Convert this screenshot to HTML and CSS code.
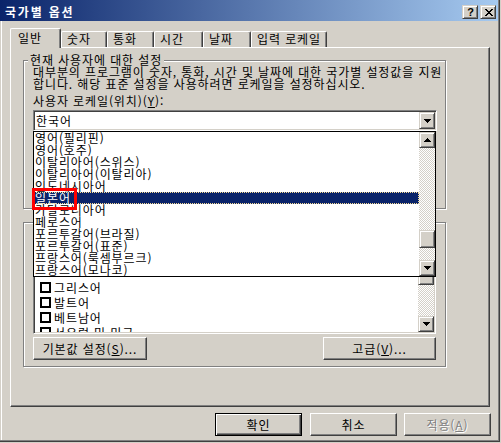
FILE: index.html
```html
<!DOCTYPE html>
<html lang="ko">
<head>
<meta charset="utf-8">
<title>국가별 옵션</title>
<link rel="stylesheet" href="styles.css">
</head>
<body>
<div class="window">
  <div class="titlebar">
    <span class="title">국가별 옵션</span>
    <div class="caption-btns">
      <div class="cbtn help">?</div>
      <div class="cbtn close">
        <svg width="8" height="7" viewBox="0 0 8 7" shape-rendering="crispEdges"><path d="M0 0h2v1H0zM6 0h2v1H6zM1 1h2v1H1zM5 1h2v1H5zM2 2h4v1H2zM3 3h2v1H3zM2 4h4v1H2zM1 5h2v1H1zM5 5h2v1H5zM0 6h2v1H0zM6 6h2v1H6z"/></svg>
      </div>
    </div>
  </div>

  <div class="tabs">
    <div class="tab active w51">일반</div>
    <div class="tab w46">숫자</div>
    <div class="tab w47">통화</div>
    <div class="tab w49">시간</div>
    <div class="tab w48">날짜</div>
    <div class="tab w76">입력 로케일</div>
  </div>

  <div class="panel">
    <div class="group group-1">
      <div class="legend">현재 사용자에 대한 설정</div>
      <div class="desc">대부분의 프로그램이 숫자, 통화, 시간 및 날짜에 대한 국가별 설정값을 지원<br>합니다. 해당 표준 설정을 사용하려면 로케일을 설정하십시오.</div>
      <div class="field-label">사용자 로케일(위치)(<u>Y</u>):</div>
      <div class="combo">
        <span class="combo-text">한국어</span>
        <div class="sb-btn combo-btn">
          <svg width="7" height="4" viewBox="0 0 7 4" shape-rendering="crispEdges"><path d="M0 0h7v1H0zM1 1h5v1H1zM2 2h3v1H2zM3 3h1v1H3z"/></svg>
        </div>
        <div class="dropdown">
          <div class="dd-list">
            <div class="dd-item">영어(필리핀)</div>
            <div class="dd-item">영어(호주)</div>
            <div class="dd-item">이탈리아어(스위스)</div>
            <div class="dd-item">이탈리아어(이탈리아)</div>
            <div class="dd-item">인도네시아어</div>
            <div class="dd-item selected">일본어</div>
            <div class="dd-item">카탈로니아어</div>
            <div class="dd-item">페로스어</div>
            <div class="dd-item">포르투갈어(브라질)</div>
            <div class="dd-item">포르투갈어(표준)</div>
            <div class="dd-item">프랑스어(룩셈부르크)</div>
            <div class="dd-item">프랑스어(모나코)</div>
          </div>
          <div class="scrollbar">
            <div class="sb-btn">
              <svg width="7" height="4" viewBox="0 0 7 4" shape-rendering="crispEdges"><path d="M3 0h1v1H3zM2 1h3v1H2zM1 2h5v1H1zM0 3h7v1H0z"/></svg>
            </div>
            <div class="track dd-track-a"></div>
            <div class="sb-thumb dd-thumb"></div>
            <div class="track dd-track-b"></div>
            <div class="sb-btn">
              <svg width="7" height="4" viewBox="0 0 7 4" shape-rendering="crispEdges"><path d="M0 0h7v1H0zM1 1h5v1H1zM2 2h3v1H2zM3 3h1v1H3z"/></svg>
            </div>
          </div>
          <div class="annot"></div>
        </div>
      </div>
    </div>

    <div class="group group-2">
      <div class="checklist">
        <div class="cl-items">
          <div class="cl-item"><span class="box"></span><span>그리스어</span></div>
          <div class="cl-item"><span class="box"></span><span>발트어</span></div>
          <div class="cl-item"><span class="box"></span><span>베트남어</span></div>
          <div class="cl-item"><span class="box"></span><span>서유럽 및 미국</span></div>
        </div>
        <div class="scrollbar">
          <div class="sb-btn">
            <svg width="7" height="4" viewBox="0 0 7 4" shape-rendering="crispEdges"><path d="M3 0h1v1H3zM2 1h3v1H2zM1 2h5v1H1zM0 3h7v1H0z"/></svg>
          </div>
          <div class="sb-thumb cl-thumb"></div>
          <div class="track cl-track"></div>
          <div class="sb-btn">
            <svg width="7" height="4" viewBox="0 0 7 4" shape-rendering="crispEdges"><path d="M0 0h7v1H0zM1 1h5v1H1zM2 2h3v1H2zM3 3h1v1H3z"/></svg>
          </div>
        </div>
      </div>
      <div class="btn-row">
        <div class="btn btn-default-set">기본값 설정(<u>S</u>)...</div>
        <div class="btn btn-advanced">고급(<u>V</u>)...</div>
      </div>
    </div>
  </div>

  <div class="footer">
    <div class="btn dlg-btn default ok">확인</div>
    <div class="btn dlg-btn">취소</div>
    <div class="btn dlg-btn disabled">적용(<u>A</u>)</div>
  </div>
</div>
</body>
</html>
```
FILE: styles.css
```css
html, body {
  margin: 0;
  padding: 0;
  background: #d4d0c8;
}

body {
  font-family: "Noto Sans CJK KR", "Noto Sans", sans-serif;
  font-size: 12px;
  line-height: 12px;
  letter-spacing: 0.9px;
  color: #000;
}

u { text-decoration: underline; text-underline-offset: 1px; }

.window {
  position: relative;
  width: 500px;
  height: 442px;
  box-sizing: border-box;
  background: #d4d0c8;
  border-right: 1px solid #404040;
  border-bottom: 1px solid #404040;
  box-shadow: inset -1px -1px 0 #808080, inset 1px 0 0 #d4d0c8, inset 2px 0 0 #fff;
}

/* title bar */
.titlebar {
  display: flex;
  align-items: center;
  justify-content: space-between;
  height: 21px;
  margin-right: 1px;
  padding: 3px 2px 0 5px;
  box-sizing: border-box;
  background: linear-gradient(to right, #0a246a, #a6caf0);
}

.title {
  color: #fff;
  font-weight: bold;
  font-size: 12px;
  letter-spacing: 1.8px;
  line-height: 12px;
}

.caption-btns {
  display: flex;
  gap: 2px;
}

.cbtn {
  width: 16px;
  height: 14px;
  box-sizing: border-box;
  background: #d4d0c8;
  border: 1px solid;
  border-color: #d4d0c8 #404040 #404040 #d4d0c8;
  box-shadow: inset 1px 1px 0 #fff, inset -1px -1px 0 #808080;
  display: flex;
  align-items: center;
  justify-content: center;
}

.help {
  font-family: "Liberation Sans", sans-serif;
  font-weight: bold;
  font-size: 11px;
  line-height: 11px;
  letter-spacing: 0;
  padding-left: 1px;
}

.close svg { margin-left: 1px; }

/* tabs */
.tabs {
  position: relative;
  z-index: 1;
  display: flex;
  align-items: flex-end;
  height: 19px;
  margin: 7px 0 0 10px;
}

.tab {
  height: 16px;
  box-sizing: border-box;
  background: #d4d0c8;
  border-top: 1px solid #fff;
  border-left: 1px solid #fff;
  border-right: 1px solid #404040;
  box-shadow: inset -1px 0 0 #808080;
  border-radius: 2px 2px 0 0;
  padding-left: 5px;
  line-height: 13px;
  white-space: nowrap;
}

.tab.active {
  height: 20px;
  margin-bottom: -1px;
  padding-left: 7px;
  line-height: 17px;
}

.w46 { width: 46px; }
.w47 { width: 47px; }
.w48 { width: 48px; }
.w49 { width: 49px; }
.w51 { width: 51px; }
.w76 { width: 76px; }

/* panel */
.panel {
  width: 480px;
  height: 360px;
  margin-left: 10px;
  box-sizing: border-box;
  border: 1px solid;
  border-color: #fff #404040 #404040 #fff;
  box-shadow: inset -1px -1px 0 #808080;
  padding: 12px 0 0 12px;
}

.group {
  width: 423px;
  box-sizing: border-box;
  border: 1px solid #808080;
  box-shadow: inset 1px 1px 0 #fff, 1px 1px 0 #fff;
  padding-left: 9px;
}

.group-1 { height: 149px; }
.group-2 { height: 145px; margin-top: 13px; }

.legend {
  width: fit-content;
  height: 12px;
  margin: -7px 0 0 -5px;
  padding: 0 2px;
  background: #d4d0c8;
  white-space: nowrap;
}

.desc {
  white-space: nowrap;
}

.field-label { margin-top: 5px; }

/* combo box */
.combo {
  position: relative;
  margin-top: 3px;
  width: 404px;
  height: 21px;
  box-sizing: border-box;
  border: 1px solid;
  border-color: #808080 #fff #fff #808080;
  box-shadow: inset 1px 1px 0 #404040, inset -1px -1px 0 #d4d0c8;
  background: #fff;
  padding: 1px 1px 1px 2px;
  display: flex;
  align-items: center;
  justify-content: space-between;
}

.sb-btn {
  width: 16px;
  height: 16px;
  flex: none;
  box-sizing: border-box;
  background: #d4d0c8;
  border: 1px solid;
  border-color: #d4d0c8 #404040 #404040 #d4d0c8;
  box-shadow: inset 1px 1px 0 #fff, inset -1px -1px 0 #808080;
  display: flex;
  align-items: center;
  justify-content: center;
}

.combo-btn { height: 17px; }

/* dropdown popup list */
.dropdown {
  position: absolute;
  z-index: 5;
  left: -1px;
  top: 20px;
  width: 403px;
  height: 146px;
  box-sizing: border-box;
  border: 1px solid #000;
  background: #fff;
  display: flex;
}

.dd-list {
  flex: 1;
  overflow: hidden;
}

.dd-item {
  height: 12px;
  line-height: 12px;
  padding-left: 1px;
  white-space: nowrap;
}

.dd-item.selected {
  background: #0a246a;
  color: #fff;
  outline: 1px dotted #f5db95;
  outline-offset: -1px;
}

.scrollbar {
  width: 16px;
  flex: none;
  display: flex;
  flex-direction: column;
  background-color: #fff;
  background-image: conic-gradient(#d4d0c8 25%, #fff 0 50%, #d4d0c8 0 75%, #fff 0);
  background-size: 2px 2px;
}

.track { flex: 1; }
.dd-track-a { flex: none; height: 82px; }
.dd-track-b { flex: none; height: 12px; }

.sb-thumb {
  flex: none;
  box-sizing: border-box;
  background: #d4d0c8;
  border: 1px solid;
  border-color: #d4d0c8 #404040 #404040 #d4d0c8;
  box-shadow: inset 1px 1px 0 #fff, inset -1px -1px 0 #808080;
}

.dd-thumb { height: 18px; }

.annot {
  position: absolute;
  left: -2px;
  top: 56px;
  width: 45px;
  height: 22px;
  box-sizing: border-box;
  border: 3px solid #ff0000;
}

/* checkbox list (scrolled; top part lies under the open dropdown) */
.checklist {
  margin-top: 25px;
  width: 403px;
  height: 86px;
  box-sizing: border-box;
  border: 1px solid;
  border-color: #808080 #fff #fff #808080;
  box-shadow: inset 1px 1px 0 #404040, inset -1px -1px 0 #d4d0c8;
  background: #fff;
  padding: 1px;
  display: flex;
}

.cl-items {
  flex: 1;
  overflow: hidden;
  padding-top: 30px;
}

.cl-item {
  height: 15px;
  display: flex;
  align-items: center;
  gap: 3px;
  padding-left: 5px;
  white-space: nowrap;
}

.box {
  width: 11px;
  height: 11px;
  box-sizing: border-box;
  border: 2px solid #000;
  background: #fff;
  flex: none;
}

.cl-thumb { height: 19px; }

/* buttons */
.btn-row {
  margin-top: 3px;
  width: 403px;
  display: flex;
  justify-content: space-between;
}

.btn {
  height: 23px;
  box-sizing: border-box;
  background: #d4d0c8;
  border: 1px solid;
  border-color: #fff #404040 #404040 #fff;
  box-shadow: inset -1px -1px 0 #808080;
  display: flex;
  align-items: center;
  justify-content: center;
  white-space: nowrap;
}

.btn-default-set { width: 114px; }
.btn-advanced { width: 113px; }

.footer {
  display: flex;
  justify-content: flex-end;
  gap: 7px;
  margin-top: 6px;
  padding-right: 8px;
}

.dlg-btn { width: 87px; }

.dlg-btn.default {
  border-color: #000;
  box-shadow: inset 1px 1px 0 #fff, inset -1px -1px 0 #404040, inset -2px -2px 0 #808080;
}

.ok { margin-right: 1px; }

.dlg-btn.disabled {
  color: #808080;
  text-shadow: 1px 1px 0 #fff;
}
```
